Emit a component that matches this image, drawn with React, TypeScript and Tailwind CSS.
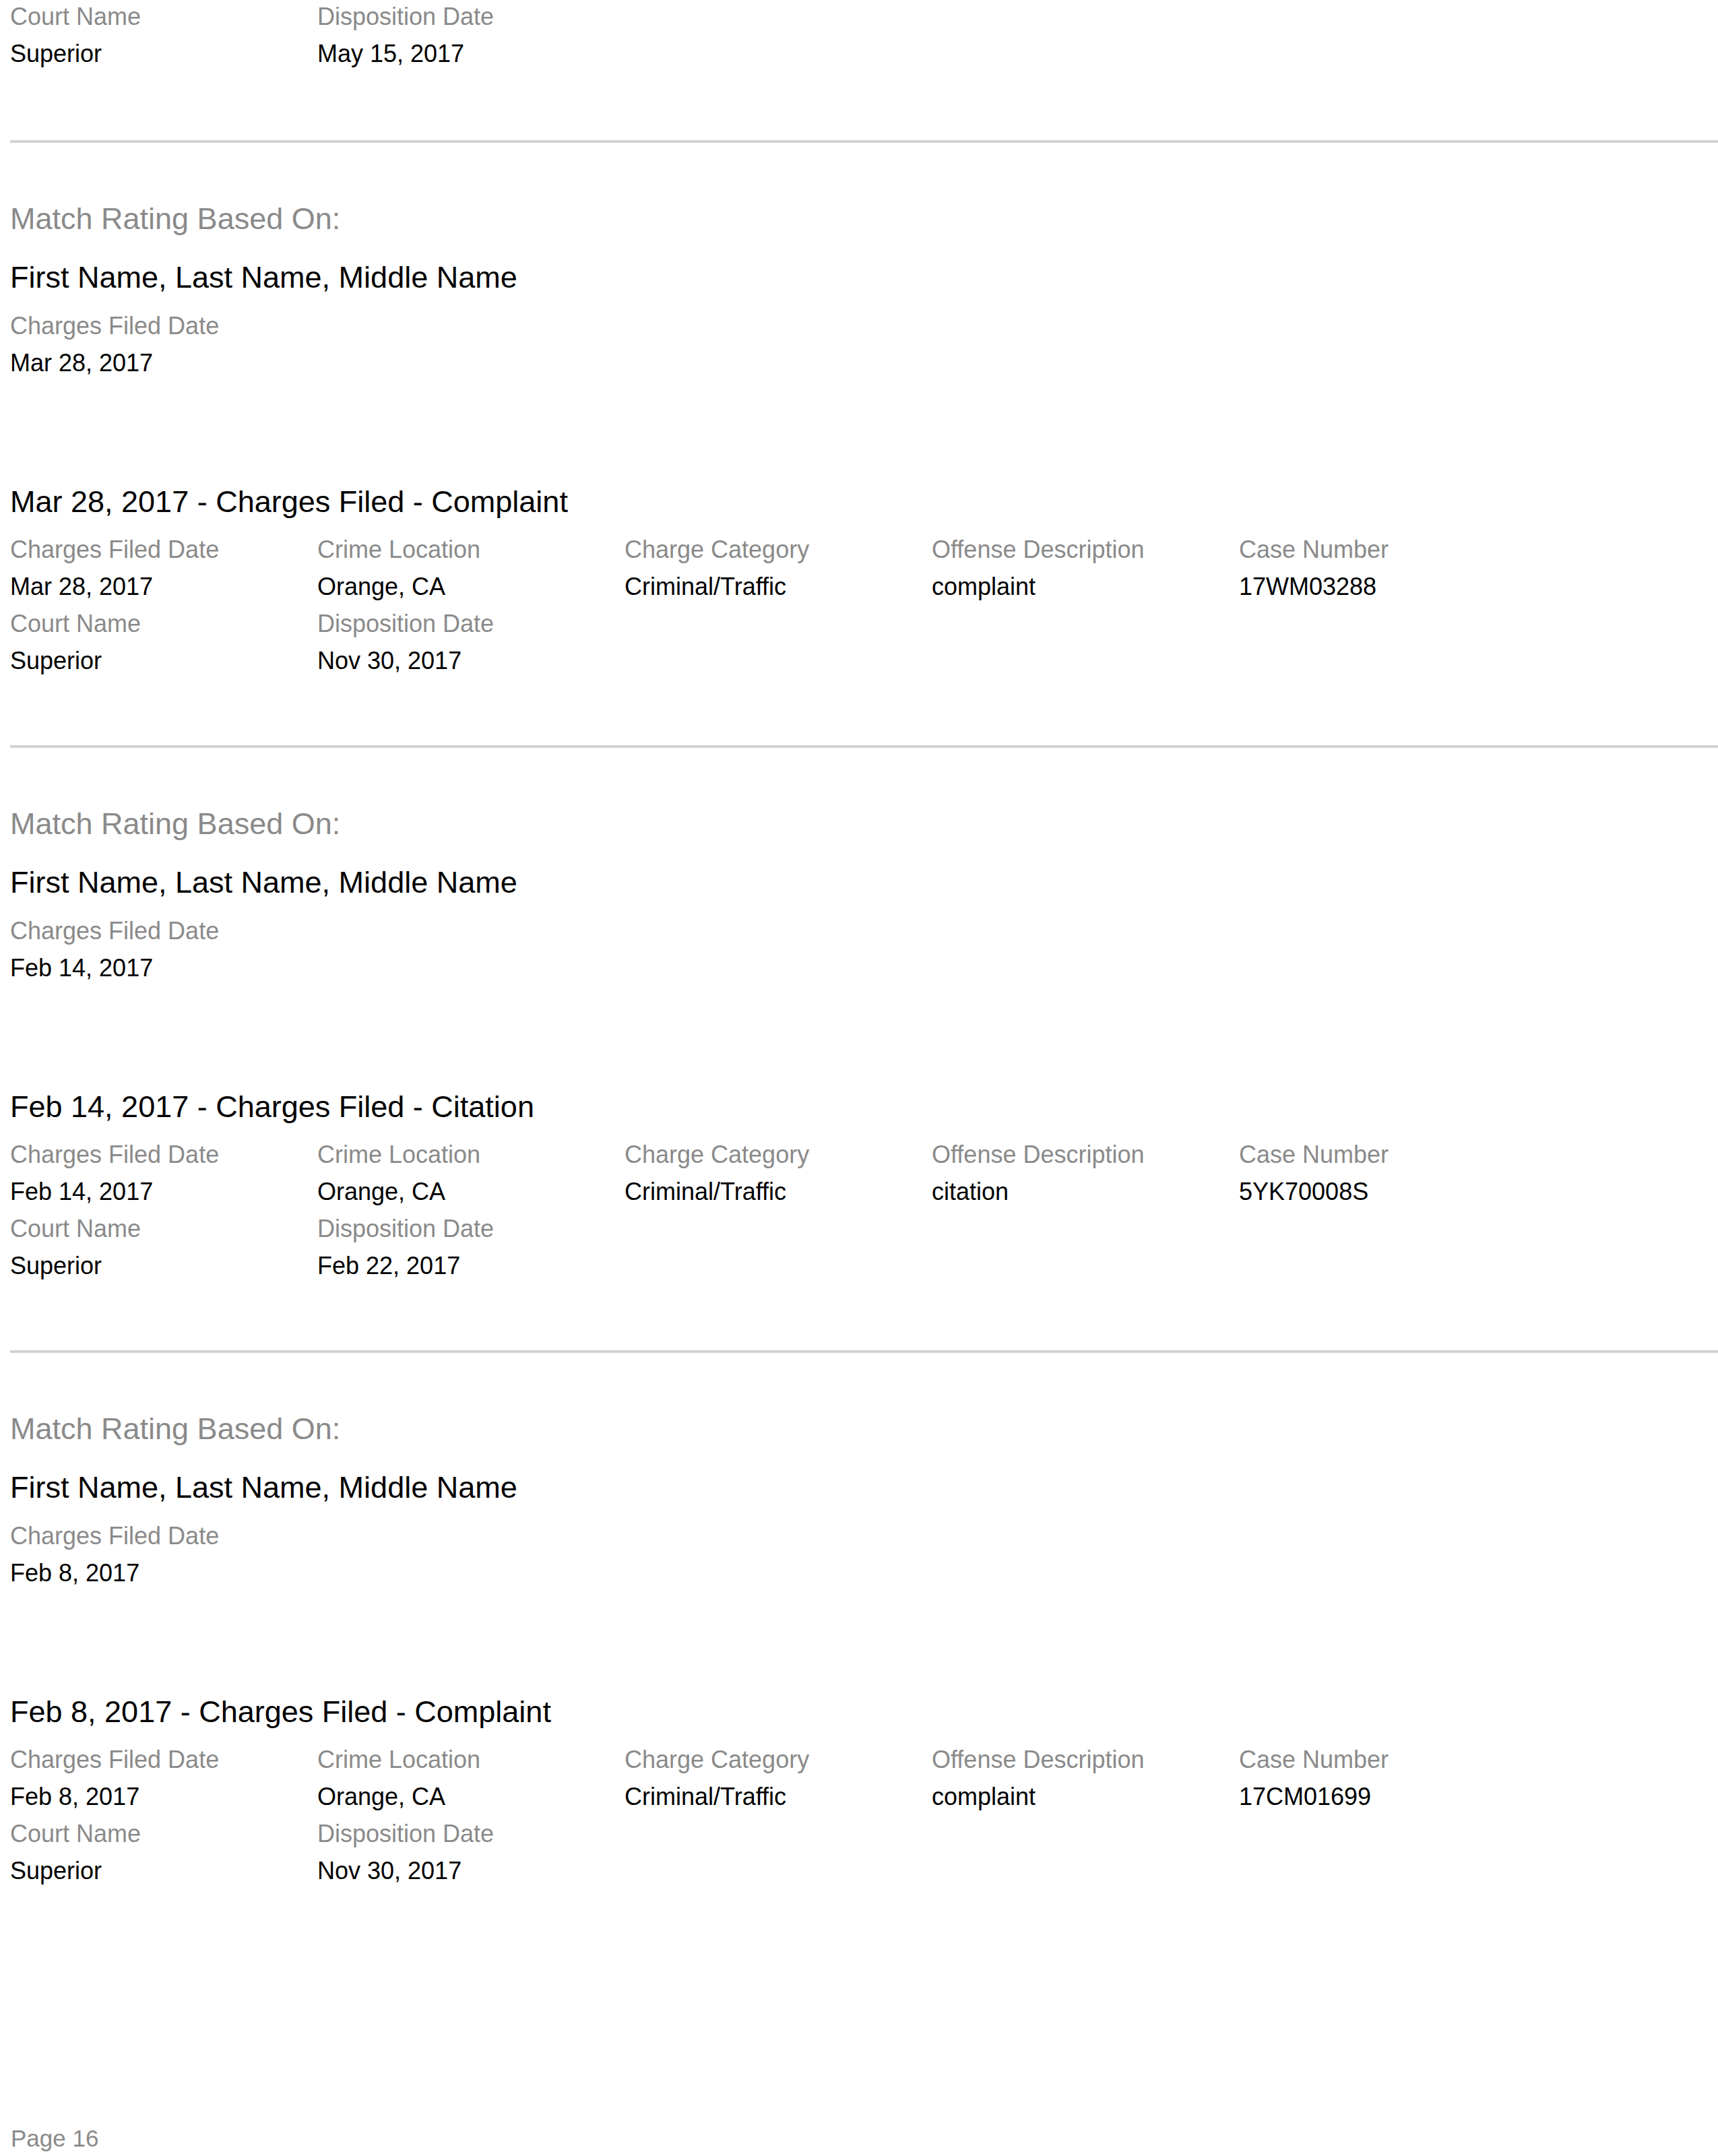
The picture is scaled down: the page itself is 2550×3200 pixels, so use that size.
import React from "react";

type Record = {
  date: string;
  kind: string;
  offense: string;
  caseNumber: string;
  disposition: string;
};

const records: Record[] = [
  { date: "Mar 28, 2017", kind: "Complaint", offense: "complaint", caseNumber: "17WM03288", disposition: "Nov 30, 2017" },
  { date: "Feb 14, 2017", kind: "Citation", offense: "citation", caseNumber: "5YK70008S", disposition: "Feb 22, 2017" },
  { date: "Feb 8, 2017", kind: "Complaint", offense: "complaint", caseNumber: "17CM01699", disposition: "Nov 30, 2017" },
];

function Label({ children }: { children: React.ReactNode }) {
  return <div className="text-[36px] leading-[55px] text-[#8a8a8a] whitespace-nowrap">{children}</div>;
}

function Value({ children }: { children: React.ReactNode }) {
  return <div className="text-[36px] leading-[55px] text-black whitespace-nowrap">{children}</div>;
}

function CourtRow({ disposition }: { disposition: string }) {
  return (
    <div className="grid grid-cols-[456px_456px]">
      <Label>Court Name</Label>
      <Label>Disposition Date</Label>
      <Value>Superior</Value>
      <Value>{disposition}</Value>
    </div>
  );
}

function Divider() {
  return <div className="h-[4px] bg-[#d3d3d3] ml-[15px]" />;
}

function Section({ r }: { r: Record }) {
  return (
    <div className="flex flex-col">
      <Divider />
      <div className="pl-[15px] flex flex-col">
        <div className="mt-[80px] text-[45px] leading-[66px] text-[#8a8a8a]">Match Rating Based On:</div>
        <div className="mt-[21px] text-[45px] leading-[66px] text-black">First Name, Last Name, Middle Name</div>
        <div className="mt-[11px]">
          <Label>Charges Filed Date</Label>
          <Value>{r.date}</Value>
        </div>
        <div className="mt-[146px] text-[45px] leading-[66px] text-black">
          {r.date} - Charges Filed - {r.kind}
        </div>
        <div className="mt-[10px] grid grid-cols-[456px_456px_456px_456px_456px]">
          <Label>Charges Filed Date</Label>
          <Label>Crime Location</Label>
          <Label>Charge Category</Label>
          <Label>Offense Description</Label>
          <Label>Case Number</Label>
          <Value>{r.date}</Value>
          <Value>Orange, CA</Value>
          <Value>Criminal/Traffic</Value>
          <Value>{r.offense}</Value>
          <Value>{r.caseNumber}</Value>
        </div>
        <CourtRow disposition={r.disposition} />
      </div>
    </div>
  );
}

export default function App() {
  return (
    <div className="w-[2550px] h-[3200px] bg-white overflow-hidden font-['Liberation_Sans',Arial,sans-serif]">
      <div className="-mt-[3px] flex flex-col">
        <div className="pl-[15px]">
          <CourtRow disposition="May 15, 2017" />
        </div>
        {records.map((r, i) => (
          <div key={r.caseNumber} className={i === 0 ? "mt-[101px]" : "mt-[98px]"}>
            <Section r={r} />
          </div>
        ))}
        <div className="mt-[344px] pl-[16px] text-[35px] leading-[51px] text-[#8a8a8a]">Page 16</div>
      </div>
    </div>
  );
}
